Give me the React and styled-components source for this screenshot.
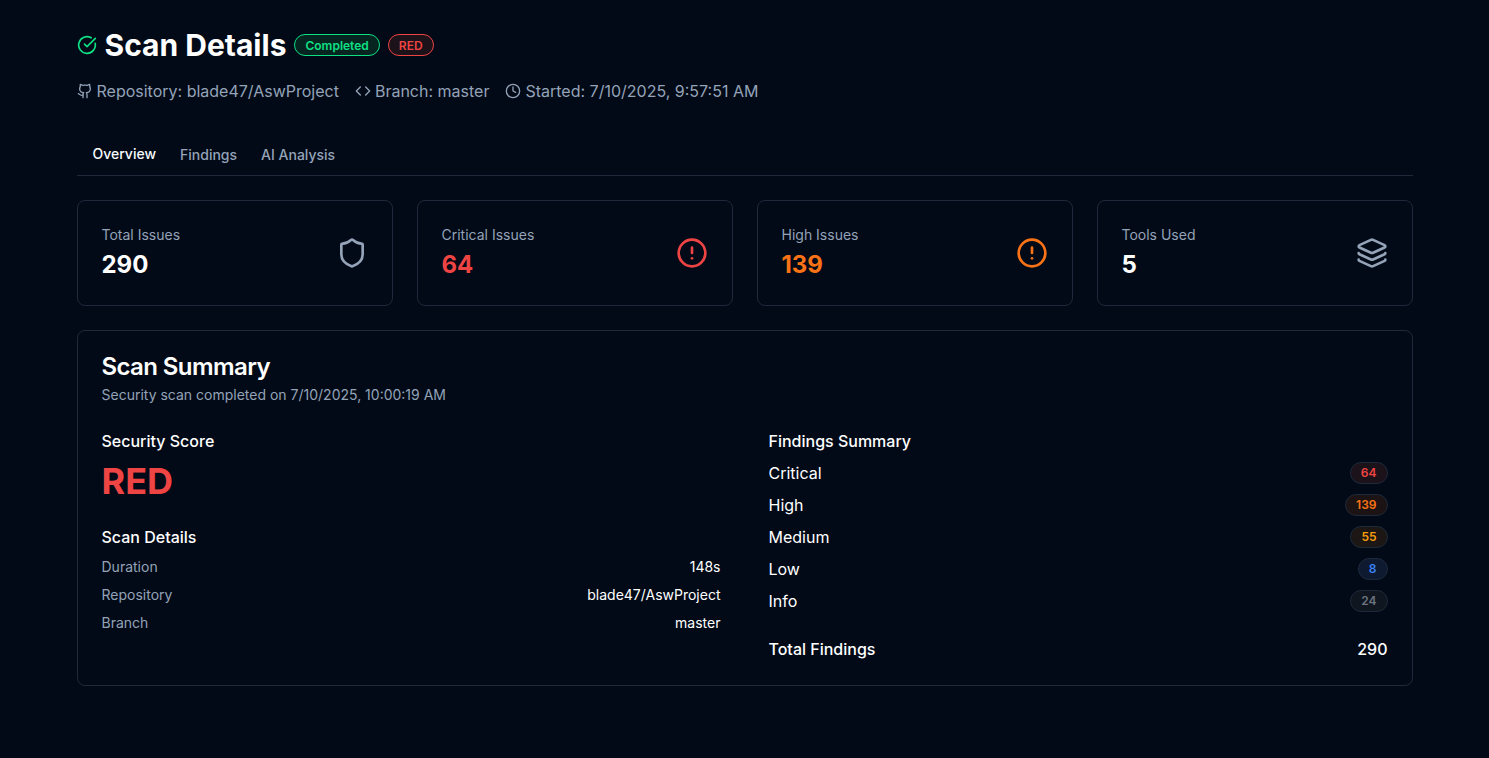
import React from 'react';
import styled, { createGlobalStyle } from 'styled-components';
import { CircleCheckBig, Github, Code, Clock, Shield, CircleAlert, Layers } from 'lucide-react';

const GlobalStyle = createGlobalStyle`
  html, body {
    margin: 0;
    padding: 0;
    background: #020a17;
  }
  body {
    font-family: Inter, "Liberation Sans", sans-serif;
    color: #f8fafc;
  }
  * {
    box-sizing: border-box;
  }
`;

const Page = styled.div`
  max-width: 1400px;
  min-height: 758px;
  margin: 0 auto;
  padding: 27px 32px 32px;
`;

const TitleRow = styled.div`
  display: flex;
  align-items: center;
  gap: 8px;
`;

const Title = styled.h1`
  margin: 0;
  font-size: 30px;
  line-height: 36px;
  font-weight: 700;
  color: #fff;
`;

const Pill = styled.span`
  display: inline-flex;
  align-items: center;
  height: 22px;
  padding: 0 10px;
  border-radius: 999px;
  border: 1px solid ${(p) => p.$color};
  background: ${(p) => p.$bg};
  color: ${(p) => p.$color};
  font-size: 12px;
  font-weight: 600;
`;

const Meta = styled.div`
  display: flex;
  gap: 16px;
  margin-top: 16px;
  color: #94a3b8;
  font-size: 16px;
  line-height: 24px;
`;

const MetaItem = styled.span`
  display: flex;
  align-items: center;
  gap: 4px;
`;

const Tabs = styled.div`
  display: flex;
  height: 41px;
  margin-top: 32px;
  padding: 0 4px;
  border-bottom: 1px solid #1e293b;
`;

const Tab = styled.div`
  padding: 0 12px;
  font-size: 14px;
  line-height: 20px;
  font-weight: 500;
  padding-top: ${(p) => (p.$active ? '9px' : '10px')};
  color: ${(p) => (p.$active ? '#f8fafc' : '#94a3b8')};
`;

const Stats = styled.div`
  display: grid;
  grid-template-columns: repeat(4, 1fr);
  gap: 24px;
  margin-top: 24px;
`;

const Card = styled.div`
  border: 1px solid #1e293b;
  border-radius: 8px;
  padding: 24px;
`;

const StatCard = styled(Card)`
  display: flex;
  align-items: center;
  justify-content: space-between;
  height: 106px;
  color: ${(p) => p.$icon};
`;

const StatLabel = styled.div`
  font-size: 14px;
  line-height: 20px;
  color: #94a3b8;
`;

const StatValue = styled.div`
  margin-top: 4px;
  font-size: 24px;
  line-height: 32px;
  font-weight: 700;
  color: ${(p) => p.$color};
`;

const Summary = styled(Card)`
  margin-top: 24px;
  height: 356px;
`;

const SummaryTitle = styled.h2`
  margin: 0;
  font-size: 24px;
  line-height: 24px;
  font-weight: 600;
  letter-spacing: -0.6px;
  color: #fff;
`;

const SummarySub = styled.p`
  margin: 6px 0 0;
  font-size: 14px;
  line-height: 20px;
  color: #94a3b8;
`;

const Columns = styled.div`
  display: grid;
  grid-template-columns: 1fr 1fr;
  gap: 48px;
  margin-top: 24px;
`;

const SectionTitle = styled.h3`
  margin: 0;
  font-size: 16px;
  line-height: 24px;
  font-weight: 500;
  color: #fff;
`;

const Score = styled.div`
  margin-top: 8px;
  font-size: 36px;
  line-height: 40px;
  font-weight: 700;
  color: #ef4444;
`;

const DetailsBlock = styled.div`
  margin-top: 24px;
`;

const DetailRows = styled.div`
  display: flex;
  flex-direction: column;
  gap: 8px;
  margin-top: 8px;
`;

const DetailRow = styled.div`
  display: flex;
  justify-content: space-between;
  font-size: 14px;
  line-height: 20px;
  color: #94a3b8;
`;

const DetailValue = styled.span`
  color: #fff;
`;

const FindingRows = styled.div`
  display: flex;
  flex-direction: column;
  gap: 8px;
  margin-top: 8px;
`;

const FindingRow = styled.div`
  display: flex;
  align-items: center;
  justify-content: space-between;
  font-size: 16px;
  line-height: 24px;
  color: #fff;
`;

const Count = styled.span`
  display: inline-flex;
  align-items: center;
  height: 22px;
  padding: 0 10px;
  border-radius: 999px;
  border: 1px solid #1e293b;
  background: ${(p) => p.$bg};
  color: ${(p) => p.$color};
  font-size: 12px;
  font-weight: 600;
`;

const Total = styled(FindingRow)`
  margin-top: 24px;
  font-weight: 500;
`;

const stats = [
  { label: 'Total Issues', value: '290', color: '#fff', iconColor: '#94a3b8', Icon: Shield },
  { label: 'Critical Issues', value: '64', color: '#ef4444', iconColor: '#ef4444', Icon: CircleAlert },
  { label: 'High Issues', value: '139', color: '#f97316', iconColor: '#f97316', Icon: CircleAlert },
  { label: 'Tools Used', value: '5', color: '#fff', iconColor: '#94a3b8', Icon: Layers },
];

const findings = [
  { name: 'Critical', count: 64, color: '#ef4444', bg: '#1c1219' },
  { name: 'High', count: 139, color: '#f97316', bg: '#1c1414' },
  { name: 'Medium', count: 55, color: '#f59e0b', bg: '#1c1614' },
  { name: 'Low', count: 8, color: '#3b82f6', bg: '#0d1a30' },
  { name: 'Info', count: 24, color: '#6b7280', bg: '#10161f' },
];

const details = [
  ['Duration', '148s'],
  ['Repository', 'blade47/AswProject'],
  ['Branch', 'master'],
];

const App = () => {
  return (
    <Page>
      <GlobalStyle />
      <TitleRow>
        <CircleCheckBig size={20} color="#0ee084" />
        <Title>Scan Details</Title>
        <Pill $color="#0ee084" $bg="#062420">Completed</Pill>
        <Pill $color="#ef4444" $bg="#1c1219">RED</Pill>
      </TitleRow>
      <Meta>
        <MetaItem><Github size={16} />Repository: blade47/AswProject</MetaItem>
        <MetaItem><Code size={16} />Branch: master</MetaItem>
        <MetaItem><Clock size={16} />Started: 7/10/2025, 9:57:51 AM</MetaItem>
      </Meta>
      <Tabs>
        <Tab $active>Overview</Tab>
        <Tab>Findings</Tab>
        <Tab>AI Analysis</Tab>
      </Tabs>
      <Stats>
        {stats.map(({ label, value, color, iconColor, Icon }) => (
          <StatCard key={label} $icon={iconColor}>
            <div>
              <StatLabel>{label}</StatLabel>
              <StatValue $color={color}>{value}</StatValue>
            </div>
            <Icon size={32} strokeWidth={2} />
          </StatCard>
        ))}
      </Stats>
      <Summary>
        <SummaryTitle>Scan Summary</SummaryTitle>
        <SummarySub>Security scan completed on 7/10/2025, 10:00:19 AM</SummarySub>
        <Columns>
          <div>
            <SectionTitle>Security Score</SectionTitle>
            <Score>RED</Score>
            <DetailsBlock>
              <SectionTitle>Scan Details</SectionTitle>
              <DetailRows>
                {details.map(([k, v]) => (
                  <DetailRow key={k}>
                    <span>{k}</span>
                    <DetailValue>{v}</DetailValue>
                  </DetailRow>
                ))}
              </DetailRows>
            </DetailsBlock>
          </div>
          <div>
            <SectionTitle>Findings Summary</SectionTitle>
            <FindingRows>
              {findings.map((f) => (
                <FindingRow key={f.name}>
                  <span>{f.name}</span>
                  <Count $color={f.color} $bg={f.bg}>{f.count}</Count>
                </FindingRow>
              ))}
            </FindingRows>
            <Total>
              <span>Total Findings</span>
              <span>290</span>
            </Total>
          </div>
        </Columns>
      </Summary>
    </Page>
  );
};

export default App;
